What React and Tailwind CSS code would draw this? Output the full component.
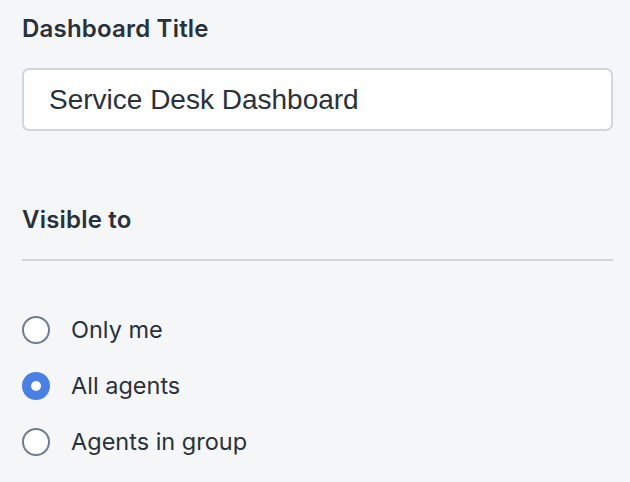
import { useState } from "react";

const options = [
  { id: "me", label: "Only me" },
  { id: "all", label: "All agents" },
  { id: "group", label: "Agents in group" },
];

export default function App() {
  const [title, setTitle] = useState("Service Desk Dashboard");
  const [visible, setVisible] = useState("all");

  return (
    <div className="min-h-[482px] w-[630px] bg-[#f5f6f8] px-[22px] pt-[15px] text-[#29313a] font-['Inter',sans-serif]">
      {/* Title field */}
      <label className="block text-[24px] font-semibold leading-[28px] tracking-[0.2px]">Dashboard Title</label>
      <input
        value={title}
        onChange={(e) => setTitle(e.target.value)}
        className="mt-[25px] block h-[63px] w-[591px] rounded-[7px] border-2 border-[#cfd6de] bg-white px-[25px] text-[28px] text-[#29313a] font-['Liberation_Sans',Arial,sans-serif] outline-none"
      />

      {/* Visibility */}
      <div className="mt-[75px] text-[24px] font-semibold leading-[28px] tracking-[0.2px]">Visible to</div>
      <div className="mt-[25px] h-[2px] w-[591px] bg-[#cfd5dc]" />

      <div className="mt-[55px] flex flex-col gap-[28px]">
        {options.map((o) => {
          const checked = visible === o.id;
          return (
            <label key={o.id} className="flex h-[28px] cursor-pointer items-center gap-[21px]">
              <span
                onClick={() => setVisible(o.id)}
                className={
                  checked
                    ? "flex h-[28px] w-[28px] items-center justify-center rounded-full bg-[#4a80e3]"
                    : "flex h-[28px] w-[28px] items-center justify-center rounded-full border-2 border-[#6e7d8f] bg-white"
                }
              >
                {checked && <span className="h-[10px] w-[10px] rounded-full bg-white" />}
              </span>
              <span className="text-[23.5px] leading-[28px]">{o.label}</span>
            </label>
          );
        })}
      </div>
    </div>
  );
}
